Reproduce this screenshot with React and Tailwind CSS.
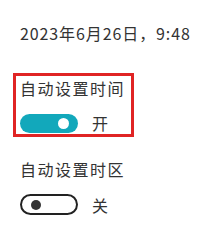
export default function App() {
  return (
    <div
      className="w-[201px] h-[229px] bg-white text-[#333333] overflow-hidden"
      style={{ fontFamily: '"Noto Sans CJK SC", "Noto Sans", sans-serif' }}
    >
      <div className="pl-[20px] pt-[22px] text-[16px] leading-[22px] tracking-[0.9px]">2023年6月26日，9:48</div>

      {/* auto time - highlighted */}
      <div className="ml-[13px] mt-[29px] w-[121px] h-[64px] border-[3px] border-[#e02424] pl-[4px] pt-[2px]">
        <div className="text-[16px] leading-[20px] tracking-[1.5px]">自动设置时间</div>
        <div className="mt-[15px] flex items-center">
          <div className="w-[58px] h-[19px] rounded-full bg-[#12a8bb] flex items-center justify-end pr-[9px]">
            <div className="w-[11px] h-[11px] rounded-full bg-white" />
          </div>
          <span className="ml-[14px] text-[16px] leading-[20px]">开</span>
        </div>
      </div>

      {/* auto timezone */}
      <div className="pl-[20px] pt-[22px]">
        <div className="text-[16px] leading-[20px] tracking-[1.5px]">自动设置时区</div>
        <div className="mt-[15px] flex items-center">
          <div className="w-[58px] h-[21px] rounded-full border-2 border-[#222222] flex items-center pl-[9px]">
            <div className="w-[10px] h-[10px] rounded-full bg-[#333333]" />
          </div>
          <span className="ml-[14px] text-[16px] leading-[20px]">关</span>
        </div>
      </div>
    </div>
  );
}
